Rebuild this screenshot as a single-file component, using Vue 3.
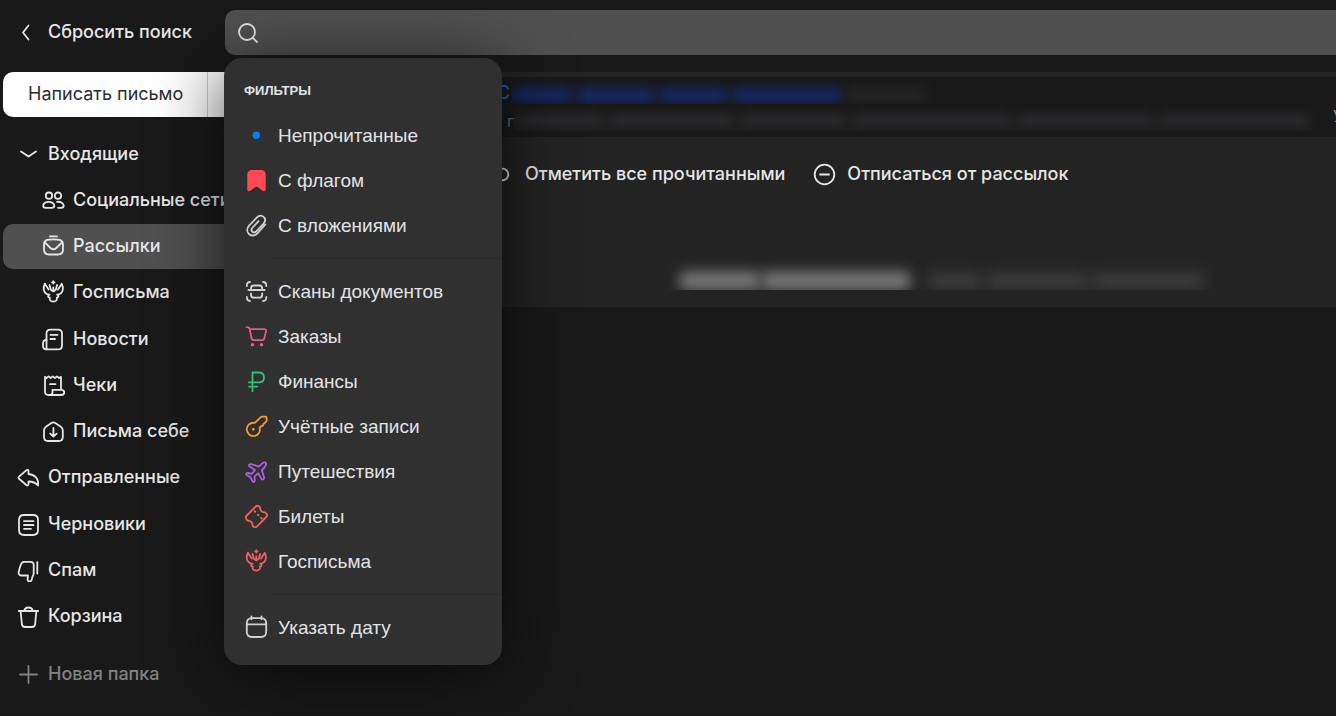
<script setup>
import { ref } from 'vue'

const query = ref('')

const circle = (x, y, r) => `M${x - r} ${y}a${r} ${r} 0 1 0 ${2 * r} 0a${r} ${r} 0 1 0 ${-2 * r} 0z`

const eagle = [
  'M3.800 3.800C2.700 6 2.600 7.800 2.800 9.500c.4 3 2.200 4.900 5.700 5.100-1.900.8-2 2.500.3 3-.9 2.400 1 4 3.500 4s4.400-1.600 3.500-4c2.300-.5 2.200-2.200.3-3 3.500-.2 5.300-2.100 5.700-5.100.2-1.700.1-3.500-1-5.700L17 9.600',
  'M3.800 3.800L7.600 9.600',
  'M8.500 5l1.300 4.800 2.500 1.600 2.500-1.600L16.100 5',
  'M12.300 7.500v3.500',
  'M12.300 1.200v2.400M11.100 2.400h2.400'
]

const icons = {
  back: { s: ['M12.500 5.500l-5.500 7 5.500 7'] },
  down: { s: ['M5 9.500l7.500 5 7.500-5'] },
  search: { s: [circle(11, 11, 8), 'M17 17l4 4'] },
  social: {
    s: [
      circle(8, 7.7, 3.2),
      circle(17, 7.7, 3.2),
      'M7.600 13.800c-3 0-5.500 1.800-5.500 4 0 1.400 1.200 2 2.600 2h6c1.500 0 2.600-.6 2.600-2 0-2.200-2.600-4-5.700-4z',
      'M16 13.800c3.800-.5 6.700 1.800 6.700 4 0 1.400-1.200 2-2.600 2h-3'
    ]
  },
  mailing: {
    s: [
      'M9 2.400h7',
      'M5.800 5.900C8 5.200 16.800 5.200 19 5.900c2 .8 3 2.400 3 5.100v4.500c0 3.500-1.700 5-5 5H8c-3.300 0-5-1.500-5-5V11c0-2.700 1-4.300 2.800-5.100z',
      'M3.500 8.200l6 5.800c1.900 1.700 3.900 1.700 5.800 0l6-5.800'
    ]
  },
  eagle: { s: eagle },
  news: {
    s: [
      'M9.500 2.600H17c2.800 0 4 1.300 4 4v11.800c0 2.800-1.300 4-4 4H5.500V6.600c0-2.800 1.200-4 4-4z',
      'M5.500 13C3 13 2 14.200 2 16.500v2.300c0 2.400 1.200 3.600 3.500 3.600',
      'M9.500 7.800h7M9.500 12h4.500'
    ]
  },
  receipt: {
    s: [
      'M20 16.500V3.800l-2 1.200-2-1.600-2.100 1.600-2.100-1.600L9.700 5 7.700 3.400 5.700 5 4 3.700v14.800c0 2.500 1 3.500 3.500 3.500H20c2.200 0 3.300-1.200 3.300-2.700 0-1.600-1.300-2.500-3.300-2.500h-8.500v2.500c0 1.700-1 2.700-2.500 2.700',
      'M9 11.200h5.500'
    ]
  },
  self: {
    s: [
      'M3 11.500c0-1.800.5-2.700 2-3.700l5.300-3.700c1.400-1 2.600-1 4 0L19.800 7.800c1.500 1 2 1.900 2 3.700v6.500c0 2.700-1.200 4-4 4H7c-2.800 0-4-1.300-4-4z',
      'M12.400 9v8.500M9.200 14.600l3.200 3 3.200-3'
    ]
  },
  sent: {
    s: ['M12.500 9V6.300c0-1.500-1.200-1.900-2.200-1L3 11.600c-.8.8-.8 1.400 0 2.200l7.300 6.200c1 .9 2.200.4 2.200-1v-2.500c4.200 0 7 1 9.500 4C23 14 19 9.500 12.500 9z']
  },
  drafts: {
    s: [
      'M8 3h9c3.500 0 5 1.500 5 5v10c0 3.500-1.500 5-5 5H8c-3.500 0-5-1.500-5-5V8c0-3.500 1.500-5 5-5z',
      'M8 9.200h9.500M8 13h9.500M8 16.800h7'
    ]
  },
  spam: {
    s: [
      'M8 3.800h6.500c2.200 0 3.200.9 3.200 3v8.500c0 2-1.400 3-1.700 5.200-.3 2-1 3-2.400 3-1.500 0-2.200-1-2-2.700l.4-3.300H5.800c-2.300 0-3.500-1.300-3.100-3.500.5-2.500 1.200-4.800 2-7C5.400 4.800 6.300 3.800 8 3.800z',
      'M21.300 4.200v11.300'
    ]
  },
  trash: {
    s: [
      'M2.800 7h19.400M8.200 7c.5-2.400 1.800-3.500 4.300-3.500S16.300 4.600 16.800 7',
      'M4.600 7l1.300 13.200c.2 2 1.200 2.800 3.100 2.800h7c1.900 0 2.900-.8 3.100-2.800L20.400 7'
    ]
  },
  plus: { s: ['M12.500 4v17M4 12.500h17'] },
  dot: { f: [circle(12.3, 12.3, 3.7)] },
  flag: {
    f: ['M8.500 2h8c3.600 0 5.200 1.600 5.200 5.200v14c0 1.900-1.600 2.600-3 1.600l-5-3.700c-.9-.6-1.500-.6-2.400 0l-5 3.700c-1.400 1-3 .3-3-1.600v-14C3.300 3.600 4.900 2 8.500 2z']
  },
  clip: {
    s: ['M21.300 11.500l-7.900 8.800C10.800 23.200 7 23 4.900 21c-2.200-2.200-2.200-5.700.2-8.300l7.600-8c2.300-2.400 5-2.500 6.900-.8 2 1.900 1.900 4.600-.2 6.900l-6.900 7.300c-1.400 1.500-3 1.600-4.200.6-1.200-1.200-1.100-2.700.3-4.200l6-6.300']
  },
  scan: {
    s: [
      'M2.900 7V6.500c0-2.200 1-3.500 3.100-3.500M19 3c2.200 0 3.300 1.200 3.300 3.500V7M2.900 18v.5c0 2.300 1 3.500 3.100 3.500M19 22c2.200 0 3.300-1.200 3.300-3.500V18',
      'M4.500 11h16.200',
      'M7 11V9.500C7 7.500 8 6.500 10 6.500h5.200c2 0 3 1 3 3V11M7 14.500v1.200c0 2 1 3 3 3h5.200c2 0 3-1 3-3v-1.200'
    ]
  },
  cart: {
    s: ['M2.500 3.200c2 0 2.900.3 3.200 2L7.500 14c.3 1.500 1 2.200 2.500 2.200h7.800c1.400 0 2.200-.6 2.500-2l1.700-6.700c.4-1.500-.2-2.300-1.700-2.300H5.700'],
    f: [circle(8.5, 20.8, 1.8), circle(17.5, 20.8, 1.8)]
  },
  ruble: { s: ['M8.500 22.300V3.500h6c3.400 0 5.500 2 5.500 4.900s-2.100 5-5.500 5H5M5 17.700h8.200'] },
  key: {
    s: ['M10.800 8.900l5.500-5.300c.8-.7 1.400-.9 2.400-.9h2.500c1 0 1.500.5 1.500 1.500v2c0 .9-.3 1.300-1 1.900l-2.500 2.100-.3 1.600-1.900.3-1.500 1.700c.8 2.200.3 4.500-1.300 6.200-2.700 2.700-6.800 2.700-9.400.1-2.700-2.700-2.700-6.800-.1-9.400 1.700-1.600 3.900-2.300 6.100-1.800z'],
    f: [circle(9.3, 15.3, 1.4)]
  },
  plane: {
    s: ['M21.700 3.600c-1.400-.4-2.500 0-3.700 1l-3.300 3L7.400 5.200c-1.800-.4-3.300 1.200-1.800 2.300l5.400 3.600-3.300 3.700-3.600-.8c-1.500-.3-2.400 1.200-1.300 2l3.700 2.400 2 3.800c.8 1.500 2.500.6 2.300-1l-.3-3.500 3.700-3.500 3.200 5.700c1 1.500 3 .2 2.700-1.500l-2.200-7.300 2.900-3.300c1.100-1.300 1.500-2.600.9-4.200z']
  },
  ticket: {
    s: [
      'M2.600 11.600L11.800 2.500c1.100-1 2.200-1 3.300 0l1.100 1.200c-.3 2.800 1.900 5 4.700 4.700l1.400 1.300c1.100 1.100 1.100 2.200 0 3.300l-9.500 9.600c-1.100 1-2.200 1-3.300 0l-1.100-1.200c.3-2.900-1.900-5-4.700-4.800l-1.200-1.300c-1-1.300-1-2.400.1-3.700z',
      'M10.600 7.200l.6.600M13.800 10.600l.7.700M17.200 14l.6.600'
    ]
  },
  calendar: {
    s: [
      'M8 3.200h9c3.600 0 5.200 1.600 5.200 5.100v8.500c0 3.500-1.600 5.200-5.200 5.200H8c-3.600 0-5.200-1.700-5.200-5.200V8.300c0-3.500 1.600-5.100 5.200-5.100z',
      'M3 9.300h19M7.500 1.500v2.800M17.500 1.500v2.800'
    ]
  },
  ring: { s: [circle(12.5, 12.5, 5.8)] },
  minus: { s: [circle(12.5, 12.5, 9.8), 'M8 12.500h9'] }
}

const folders = [
  { icon: 'down', label: 'Входящие' },
  { icon: 'social', label: 'Социальные сети', sub: true },
  { icon: 'mailing', label: 'Рассылки', sub: true, active: true },
  { icon: 'eagle', label: 'Госписьма', sub: true },
  { icon: 'news', label: 'Новости', sub: true },
  { icon: 'receipt', label: 'Чеки', sub: true },
  { icon: 'self', label: 'Письма себе', sub: true },
  { icon: 'sent', label: 'Отправленные' },
  { icon: 'drafts', label: 'Черновики' },
  { icon: 'spam', label: 'Спам' },
  { icon: 'trash', label: 'Корзина' }
]

const groups = [
  [
    { icon: 'dot', label: 'Непрочитанные', tone: 'blue' },
    { icon: 'flag', label: 'С флагом', tone: 'scarlet' },
    { icon: 'clip', label: 'С вложениями', tone: 'plain' }
  ],
  [
    { icon: 'scan', label: 'Сканы документов', tone: 'plain' },
    { icon: 'cart', label: 'Заказы', tone: 'pink' },
    { icon: 'ruble', label: 'Финансы', tone: 'green' },
    { icon: 'key', label: 'Учётные записи', tone: 'orange' },
    { icon: 'plane', label: 'Путешествия', tone: 'purple' },
    { icon: 'ticket', label: 'Билеты', tone: 'coral' },
    { icon: 'eagle', label: 'Госписьма', tone: 'coral' }
  ],
  [{ icon: 'calendar', label: 'Указать дату', tone: 'plain' }]
]
</script>

<template>
  <div class="app">
    <header class="top">
      <a class="reset" href="#">
        <svg class="icon" viewBox="0 0 24 24" aria-hidden="true"><path v-for="d in icons.back.s" :key="d" :d="d" class="line" /></svg>
        <span>Сбросить поиск</span>
      </a>
      <div class="search">
        <svg class="icon search-icon" viewBox="0 0 24 24" aria-hidden="true"><path v-for="d in icons.search.s" :key="d" :d="d" class="line" /></svg>
        <input v-model="query" class="search-input" type="text" aria-label="Поиск" />
        <div class="popup">
          <h2 class="popup-title">ФИЛЬТРЫ</h2>
          <ul v-for="(group, i) in groups" :key="i" class="group">
            <li v-for="item in group" :key="item.label">
              <button class="filter" type="button">
                <svg class="icon" :class="item.tone" viewBox="0 0 24 24" aria-hidden="true">
                  <path v-for="d in icons[item.icon].s" :key="d" :d="d" class="line" />
                  <path v-for="d in icons[item.icon].f" :key="d" :d="d" class="solid" />
                </svg>
                <span>{{ item.label }}</span>
              </button>
            </li>
          </ul>
        </div>
      </div>
    </header>

    <aside class="side">
      <div class="compose">
        <button class="compose-main" type="button">Написать письмо</button>
        <button class="compose-more" type="button" aria-label="Ещё"></button>
      </div>
      <nav class="folders">
        <a v-for="f in folders" :key="f.label" href="#" class="folder" :class="{ sub: f.sub, active: f.active }">
          <svg class="icon" viewBox="0 0 24 24" aria-hidden="true"><path v-for="d in icons[f.icon].s" :key="d" :d="d" class="line" /></svg>
          <span>{{ f.label }}</span>
        </a>
      </nav>
      <button class="folder new-folder" type="button">
        <svg class="icon" viewBox="0 0 24 24" aria-hidden="true"><path v-for="d in icons.plus.s" :key="d" :d="d" class="line" /></svg>
        <span>Новая папка</span>
      </button>
    </aside>

    <main class="main">
      <section class="promo">
        <div class="promo-row">
          <a class="promo-link" href="#">С</a>
          <div class="haze haze-title"><i class="b1"></i><i class="b2"></i><i class="b3"></i><i class="b4"></i><i class="b5"></i></div>
        </div>
        <div class="promo-row promo-second">
          <span class="promo-text">г</span>
          <div class="haze haze-text"><i class="t1"></i><i class="t2"></i><i class="t3"></i><i class="t4"></i><i class="t5"></i><i class="t6"></i></div>
          <span class="promo-tail">У</span>
        </div>
      </section>
      <section class="list">
        <div class="tools">
          <button class="tool" type="button">
            <svg class="icon" viewBox="0 0 24 24" aria-hidden="true"><path v-for="d in icons.ring.s" :key="d" :d="d" class="line" /></svg>
            <span>Отметить все прочитанными</span>
          </button>
          <button class="tool" type="button">
            <svg class="icon" viewBox="0 0 24 24" aria-hidden="true"><path v-for="d in icons.minus.s" :key="d" :d="d" class="line" /></svg>
            <span>Отписаться от рассылок</span>
          </button>
        </div>
        <div class="haze haze-mail"><i class="m1"></i><i class="m2"></i><i class="m3"></i><i class="m4"></i><i class="m5"></i></div>
      </section>
    </main>
  </div>
</template>

<style>
body {
  background: #191919;
}
</style>

<style scoped>
.app {
  display: grid;
  grid-template-columns: 225px minmax(0, 1fr);
  grid-template-rows: auto 1fr;
  min-height: 100vh;
  overflow: hidden;
  background: #191919;
  color: #e6e6e6;
  font-family: Inter, "Noto Sans", sans-serif;
  font-size: 18px;
  font-weight: 500;
  line-height: 24px;
  white-space: nowrap;
}
button {
  border: 0;
  background: none;
  color: inherit;
  font: inherit;
  text-align: left;
  cursor: pointer;
}
a {
  color: inherit;
  text-decoration: none;
}
.icon {
  flex: none;
  width: 24px;
  height: 24px;
}
.line {
  fill: none;
  stroke: currentColor;
  stroke-width: 1.8;
  stroke-linecap: round;
  stroke-linejoin: round;
}
.solid {
  fill: currentColor;
}
.top {
  grid-column: 1 / -1;
  display: grid;
  grid-template-columns: 225px minmax(0, 1fr);
  padding: 10px 0 17px;
}
.reset {
  display: flex;
  align-items: center;
  gap: 8px;
  height: 44px;
  padding-left: 16px;
}
.search {
  position: relative;
  z-index: 2;
  display: flex;
  align-items: center;
  height: 45px;
  padding-left: 11px;
  border-radius: 10px 0 0 10px;
  background: #505050;
}
.search-input {
  flex: 1;
  min-width: 0;
  height: 45px;
  padding: 0 12px;
  border: 0;
  outline: 0;
  background: transparent;
  color: inherit;
  font: inherit;
}
.popup {
  position: absolute;
  top: 48px;
  left: -1px;
  box-sizing: border-box;
  width: 278px;
  padding: 21px 0 15px;
  border-radius: 18px;
  background: #303030;
  box-shadow: 0 10px 70px rgba(0, 0, 0, 0.7);
  color: #e1e3e6;
  font-family: "Liberation Sans", Arial, sans-serif;
  font-size: 19px;
  font-weight: 400;
}
.popup-title {
  margin: 0 20px 10px;
  font-size: 13px;
  font-weight: 700;
  line-height: 24px;
}
.group {
  margin: 0;
  padding: 0;
  list-style: none;
}
.group + .group::before {
  content: "";
  display: block;
  height: 1px;
  margin: 10px 1px 10px 50px;
  background: #292929;
}
.filter {
  display: flex;
  align-items: flex-start;
  gap: 10px;
  width: 100%;
  padding: 10px 20px 9px;
  line-height: 26px;
}
.plain { color: #d0d2d5; }
.blue { color: #0a7cff; }
.scarlet { color: #ff4a55; }
.pink { color: #e3588f; }
.green { color: #35bd7b; }
.orange { color: #f29a3c; }
.purple { color: #ad5fe3; }
.coral { color: #f0625f; }

.side {
  padding-left: 3px;
  overflow: hidden;
}
.compose {
  display: flex;
  height: 45px;
  border-radius: 10px 0 0 10px;
  background: #fff;
  color: #2c2d2e;
}
.compose-main {
  width: 205px;
  padding: 0 0 2px 25px;
  border-right: 1px solid #d0d0d0;
  font-weight: 400;
}
.compose-more {
  flex: 1;
}
.folders {
  display: grid;
  gap: 1px;
  margin-top: 15px;
}
.folder {
  display: flex;
  gap: 8px;
  padding: 10px 0 11px 13px;
  border-radius: 10px 0 0 10px;
}
.folder:nth-child(4n + 5) {
  margin-top: 1px;
}
.sub {
  padding-left: 38px;
}
.active {
  background: #505050;
}
.new-folder {
  margin-top: 13px;
  color: #808284;
}

.main {
  min-width: 0;
}
.promo {
  padding: 0 0 6px 272px;
  border-top: 5px solid #232323;
  overflow: hidden;
}
.promo-row {
  display: flex;
  height: 27px;
}
.promo-link {
  flex: none;
  width: 14px;
  margin-top: 4px;
  color: #1a66d8;
  font-weight: 400;
}
.promo-second {
  padding-left: 10px;
}
.promo-text {
  flex: none;
  width: 6px;
  margin-top: 5px;
  color: #6c6e70;
  font-size: 16px;
  font-weight: 400;
}
.promo-tail {
  flex: none;
  width: 3px;
  overflow: hidden;
  color: #8a8c90;
  font-size: 16px;
  font-weight: 400;
}
.haze {
  display: flex;
  flex: 1;
  min-width: 0;
  overflow: hidden;
}
.haze i {
  flex: none;
  height: 14px;
  filter: blur(6px);
}
.haze-title {
  gap: 6px;
  padding-top: 11px;
}
.haze-title i { background: #122a6a; }
.haze-title .b1 { width: 60px; }
.haze-title .b2 { width: 78px; }
.haze-title .b3 { width: 66px; }
.haze-title .b4 { width: 108px; }
.haze-title .b5 { width: 78px; background: #252525; }
.haze-text {
  gap: 6px;
  padding-top: 10px;
}
.haze-text i { background: #2a2a2d; }
.haze-text .t1 { width: 90px; }
.haze-text .t2 { width: 126px; }
.haze-text .t3 { width: 106px; }
.haze-text .t4 { width: 158px; }
.haze-text .t5 { width: 136px; }
.haze-text .t6 { width: 150px; }

.list {
  height: 170px;
  background: #232323;
}
.tools {
  display: flex;
  gap: 27px;
  padding: 25px 0 0 265px;
}
.tool {
  display: flex;
  gap: 11px;
  padding: 0;
}
.haze-mail {
  height: 50px;
  margin-top: 54px;
  padding: 32px 0 0 455px;
  box-sizing: border-box;
}
.haze-mail i {
  height: 18px;
  filter: blur(7px);
  background: #3b3b3d;
}
.haze-mail .m1 { width: 80px; background: #7c7c7c; }
.haze-mail .m2 { width: 148px; margin: 0 18px 0 2px; background: #7c7c7c; }
.haze-mail .m3 { width: 54px; }
.haze-mail .m4 { width: 102px; margin: 0 4px; }
.haze-mail .m5 { width: 112px; }
</style>
